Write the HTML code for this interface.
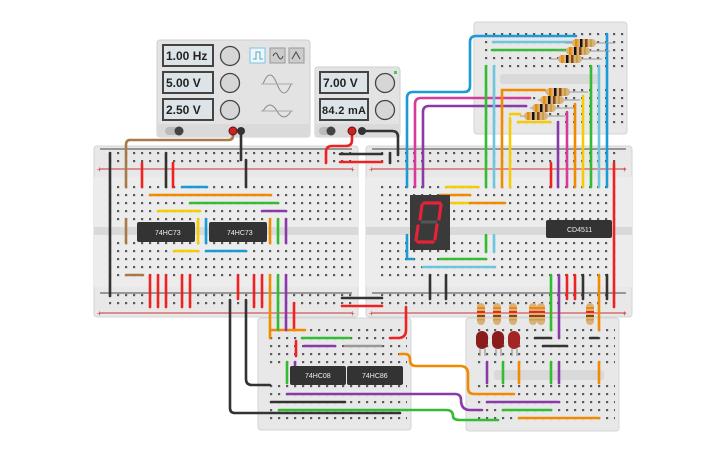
<!DOCTYPE html>
<html><head><meta charset="utf-8"><style>
html,body{margin:0;padding:0;background:#fff;width:725px;height:453px;overflow:hidden}
svg{display:block;font-family:"Liberation Sans",sans-serif}
</style></head><body>
<svg width="725" height="453" viewBox="0 0 725 453" xmlns="http://www.w3.org/2000/svg">
<defs>
<pattern id="pL" x="106" y="183" width="8" height="8" patternUnits="userSpaceOnUse"><rect x="3" y="3" width="2.2" height="2.2" fill="#5a5a5a"/></pattern>
<pattern id="pLr" x="106" y="149" width="8" height="8" patternUnits="userSpaceOnUse"><rect x="3" y="3" width="2.2" height="2.2" fill="#5a5a5a"/></pattern>
<pattern id="pLr2" x="106" y="291" width="8" height="8" patternUnits="userSpaceOnUse"><rect x="3" y="3" width="2.2" height="2.2" fill="#5a5a5a"/></pattern>
<pattern id="pR" x="378" y="183" width="8" height="8" patternUnits="userSpaceOnUse"><rect x="3" y="3" width="2.2" height="2.2" fill="#5a5a5a"/></pattern>
<pattern id="pRr" x="378" y="149" width="8" height="8" patternUnits="userSpaceOnUse"><rect x="3" y="3" width="2.2" height="2.2" fill="#5a5a5a"/></pattern>
<pattern id="pRr2" x="378" y="291" width="8" height="8" patternUnits="userSpaceOnUse"><rect x="3" y="3" width="2.2" height="2.2" fill="#5a5a5a"/></pattern>
<pattern id="pT" x="482" y="30" width="8" height="8" patternUnits="userSpaceOnUse"><rect x="3" y="3" width="2.2" height="2.2" fill="#5a5a5a"/></pattern>
<pattern id="pBL" x="267" y="326" width="8" height="8" patternUnits="userSpaceOnUse"><rect x="3" y="3" width="2.2" height="2.2" fill="#5a5a5a"/></pattern>
<pattern id="pBR" x="475" y="326" width="8" height="8" patternUnits="userSpaceOnUse"><rect x="3" y="3" width="2.2" height="2.2" fill="#5a5a5a"/></pattern>
</defs>

<rect x="94" y="146" width="264" height="171" rx="3" fill="#e8e8e8" stroke="#d4d4d4"/>
<rect x="94" y="177" width="264" height="110" fill="#ececec"/>
<rect x="94" y="227" width="264" height="8" fill="#d9d9d9"/>
<line x1="100" y1="149" x2="352" y2="149" stroke="#444" stroke-width="1"/>
<line x1="100" y1="169" x2="352" y2="169" stroke="#c33" stroke-width="1"/>
<line x1="100" y1="293" x2="352" y2="293" stroke="#444" stroke-width="1"/>
<line x1="100" y1="313" x2="352" y2="313" stroke="#c33" stroke-width="1"/>
<rect x="106" y="149" width="248" height="16" fill="url(#pLr)"/>
<rect x="106" y="291" width="248" height="16" fill="url(#pLr2)"/>
<rect x="106" y="183" width="248" height="40" fill="url(#pL)"/>
<rect x="106" y="239" width="248" height="40" fill="url(#pL)"/>
<text x="97" y="172" font-size="8" fill="#c33">+</text><text x="97" y="316" font-size="8" fill="#c33">+</text>
<text x="350" y="172" font-size="8" fill="#c33">+</text><text x="350" y="316" font-size="8" fill="#c33">+</text>

<rect x="366" y="146" width="266" height="171" rx="3" fill="#e8e8e8" stroke="#d4d4d4"/>
<rect x="366" y="177" width="266" height="110" fill="#ececec"/>
<rect x="366" y="227" width="266" height="8" fill="#d9d9d9"/>
<line x1="372" y1="149" x2="626" y2="149" stroke="#444"/>
<line x1="372" y1="169" x2="626" y2="169" stroke="#c33"/>
<line x1="372" y1="293" x2="626" y2="293" stroke="#444"/>
<line x1="372" y1="313" x2="626" y2="313" stroke="#c33"/>
<rect x="378" y="149" width="240" height="16" fill="url(#pRr)"/>
<rect x="378" y="291" width="240" height="16" fill="url(#pRr2)"/>
<rect x="378" y="183" width="240" height="40" fill="url(#pR)"/>
<rect x="378" y="239" width="240" height="40" fill="url(#pR)"/>
<text x="369" y="172" font-size="8" fill="#c33">+</text><text x="622" y="172" font-size="8" fill="#c33">+</text>
<text x="369" y="316" font-size="8" fill="#c33">+</text><text x="622" y="316" font-size="8" fill="#c33">+</text>

<rect x="474" y="22" width="153" height="112" rx="3" fill="#e8e8e8" stroke="#d4d4d4"/>
<rect x="500" y="74" width="100" height="10" rx="3" fill="#d9d9d9"/>
<rect x="482" y="30" width="144" height="40" fill="url(#pT)"/>
<rect x="482" y="86" width="144" height="40" fill="url(#pT)"/>

<rect x="258" y="318" width="153" height="112" rx="3" fill="#e8e8e8" stroke="#d4d4d4"/>
<rect x="267" y="326" width="140" height="40" fill="url(#pBL)"/>
<rect x="267" y="382" width="140" height="40" fill="url(#pBL)"/>

<rect x="466" y="318" width="153" height="113" rx="3" fill="#e8e8e8" stroke="#d4d4d4"/>
<rect x="494" y="370" width="110" height="10" rx="3" fill="#d9d9d9"/>
<rect x="475" y="326" width="140" height="40" fill="url(#pBR)"/>
<rect x="475" y="382" width="140" height="40" fill="url(#pBR)"/>

<rect x="157" y="40" width="153" height="97" rx="3" fill="#e3e3e3" stroke="#cfcfcf"/>
<rect x="157" y="124" width="153" height="13" fill="#dadada"/>
<rect x="315" y="67" width="85" height="70" rx="3" fill="#e3e3e3" stroke="#cfcfcf"/>
<rect x="315" y="124" width="85" height="13" fill="#dadada"/>
<g stroke="#444" stroke-width="2" fill="#dde4e8">
<rect x="163" y="45" width="50" height="21"/><rect x="163" y="72" width="50" height="21"/><rect x="163" y="99" width="50" height="21"/>
<rect x="320" y="72" width="48" height="21"/><rect x="320" y="99" width="48" height="21"/>
</g>
<g font-size="12" font-weight="bold" fill="#222">
<text x="166" y="60">1.00 Hz</text><text x="166" y="87">5.00 V</text><text x="166" y="114">2.50 V</text>
<text x="323" y="87">7.00 V</text>
</g>
<text x="322" y="114" font-size="11" font-weight="bold" fill="#222" textLength="44">84.2 mA</text>
<g fill="#d6d6d6" stroke="#444" stroke-width="1.3">
<circle cx="230" cy="56" r="9.5"/><circle cx="230" cy="83" r="9.5"/><circle cx="230" cy="110" r="9.5"/>
<circle cx="385" cy="83" r="9.5"/><circle cx="385" cy="110" r="9.5"/>
</g>
<rect x="250" y="48" width="15" height="15" fill="#eef6fb" stroke="#7cc3e8"/>
<rect x="270" y="48" width="15" height="15" fill="#ccc" stroke="#999"/>
<rect x="289" y="48" width="15" height="15" fill="#ccc" stroke="#999"/>
<path d="M253 59 h3 v-7 h4 v7 h3" stroke="#5ab" fill="none"/>
<path d="M273 56 q3 -6 5 0 q3 6 5 0" stroke="#444" fill="none"/>
<path d="M292 59 l4 -7 l4 7" stroke="#444" fill="none"/>
<path d="M263 84 q7 -18 14 0 q7 18 14 0" stroke="#888" fill="none"/><line x1="261" y1="84" x2="293" y2="84" stroke="#aaa"/>
<path d="M263 111 q7 -12 14 0 q7 12 14 0" stroke="#888" fill="none"/><line x1="261" y1="111" x2="293" y2="111" stroke="#aaa"/>
<rect x="165" y="127" width="18" height="8" rx="4" fill="#bbb"/><circle cx="179" cy="131" r="4.5" fill="#444"/>
<rect x="319" y="127" width="16" height="8" rx="4" fill="#bbb"/><circle cx="331" cy="131" r="4.5" fill="#444"/>
<rect x="394" y="71" width="3" height="3" fill="#4c4"/>

<g fill="none" stroke-width="2.6" stroke-linecap="round" stroke-linejoin="round">
<path d="M233 131 V136 Q233 140 228 140 H130 Q126 140 126 145 V187" stroke="#a87a4a"/>
<path d="M126 219 V243 M126 275 H143" stroke="#a87a4a"/>
<path d="M241 131 V160" stroke="#333"/>
<path d="M110 153 V296" stroke="#333"/>
<path d="M166 153 V187 M246 160 V187" stroke="#333"/>
<path d="M142 163 V187 M173 163 V187" stroke="#e22"/>
<path d="M182 187 H207" stroke="#1a9ad6"/>
<path d="M150 195 H271" stroke="#f08a00"/>
<path d="M190 203 H278" stroke="#3b3"/>
<path d="M158 211 H200 M198 219 V243 M174 251 H198" stroke="#f5cc00"/>
<path d="M262 211 H286" stroke="#8a3aa8"/>
<path d="M206 219 V243 M206 251 H246" stroke="#1a9ad6"/>
<path d="M270 219 V243" stroke="#f08a00"/><path d="M278 219 V243" stroke="#3b3"/><path d="M286 219 V243" stroke="#8a3aa8"/>
<path d="M150 275 V307 M158 275 V307 M166 275 V307 M182 275 V307 M190 275 V307 M238 275 V299 M254 275 V307 M262 275 V307" stroke="#e22"/>
<path d="M294 303 V330 M296 341 V356" stroke="#e22"/>
<path d="M270 275 V338 M270 330 H305" stroke="#f08a00"/>
<path d="M278 275 V330" stroke="#3b3"/>
<path d="M286 275 V330" stroke="#8a3aa8"/>
<path d="M230 300 V408 Q230 413 235 413 H400" stroke="#333"/>
<path d="M246 300 V379 Q246 385 252 385 H270" stroke="#333"/>
<path d="M326 163 V152 Q326 146 332 146 H346 Q352 146 352 140 V131" stroke="#e22"/>
<path d="M340 162 H382" stroke="#e22"/><path d="M340 154 H382" stroke="#333"/>
<path d="M342 298 H382" stroke="#333"/><path d="M342 306 H382" stroke="#e22"/>
<path d="M362 131 H392 Q398 131 398 137 V155" stroke="#333"/>
<path d="M390 153 V163" stroke="#333"/>
<path d="M407 187 V98 Q407 92 413 92 H464 Q470 92 470 86 V42 Q470 36 476 36 H576" stroke="#1a9ad6"/>
<path d="M415 187 V104 Q415 98 421 98 H530" stroke="#d63a9a"/>
<path d="M423 187 V112 Q423 106 429 106 H526" stroke="#8a3aa8"/>
<path d="M486 66 V110 M486 90 V187" stroke="#3b3"/>
<path d="M494 66 V110 M494 90 V187" stroke="#6cc7de"/>
<path d="M502 90 V187" stroke="#f08a00"/><path d="M510 118 V187" stroke="#f5cc00"/>
<path d="M493 42 H580" stroke="#6cc7de"/><path d="M492 50 H575" stroke="#3b3"/>
<path d="M502 90 H545" stroke="#f08a00"/>
<path d="M510 114 H520 M518 122 H550" stroke="#f5cc00"/>
<path d="M558 122 V187" stroke="#8a3aa8"/><path d="M567 112 V187" stroke="#d63a9a"/>
<path d="M575 104 V187" stroke="#f08a00"/><path d="M583 96 V187" stroke="#f5cc00"/>
<path d="M591 66 V187" stroke="#3b3"/><path d="M599 66 V187" stroke="#6cc7de"/>
<path d="M607 34 V187" stroke="#1a9ad6"/>
<path d="M551 163 V187" stroke="#e22"/><path d="M614 163 V307" stroke="#e22"/>
<path d="M446 187 H478 M446 203 H470" stroke="#f5cc00"/>
<path d="M440 195 H470 M470 203 H505" stroke="#f08a00"/>
<path d="M486 235 V252" stroke="#3b3"/>
<path d="M494 235 V252" stroke="#6cc7de"/>
<path d="M407 235 V257 M407 259 H413" stroke="#1a9ad6"/>
<path d="M440 259 H486" stroke="#3b3"/><path d="M423 267 H495" stroke="#6cc7de"/>
<path d="M430 275 V299 M446 275 V299" stroke="#333"/>
<path d="M551 275 V330" stroke="#3b3"/><path d="M559 275 V338" stroke="#8a3aa8"/>
<path d="M567 275 V299 M575 275 V299" stroke="#e22"/>
<path d="M583 275 V299 M607 275 V299" stroke="#333"/>
<path d="M599 275 V330" stroke="#f08a00"/>
<path d="M406 307 V330 Q406 338 398 338 H390" stroke="#e22"/>
<path d="M302 338 H350" stroke="#3b3"/>
<path d="M304 346 H335" stroke="#8a3aa8"/>
<path d="M345 346 H381" stroke="#999"/>
<path d="M400 354 H405 Q410 354 410 360 Q410 366 416 366 H460 Q468 366 468 374 V388 Q468 394 474 394 H514" stroke="#f08a00"/>
<path d="M287 362 V383" stroke="#3b3"/><path d="M295 362 V383" stroke="#8a3aa8"/>
<path d="M287 394 H455 Q461 394 461 400 Q461 410 470 410 H482" stroke="#8a3aa8"/>
<path d="M271 402 H345" stroke="#333"/>
<path d="M279 410 H446 Q453 410 453 416 Q453 420 460 420 H498" stroke="#3b3"/>
<path d="M487 362 V383" stroke="#8a3aa8"/><path d="M503 362 V383" stroke="#3b3"/><path d="M519 362 V383" stroke="#f08a00"/>
<path d="M551 362 V383" stroke="#3b3"/><path d="M559 362 V383" stroke="#8a3aa8"/><path d="M599 362 V383" stroke="#f08a00"/>
<path d="M487 402 H559" stroke="#8a3aa8"/><path d="M503 410 H551" stroke="#3b3"/><path d="M519 418 H599" stroke="#f08a00"/>
<path d="M535 338 H551 M543 346 H567 M590 338 H598" stroke="#333"/>
</g>

<rect x="137" y="222" width="58" height="20" rx="2" fill="#333"/>
<rect x="209" y="222" width="58" height="20" rx="2" fill="#333"/>
<text x="155" y="235" font-size="7" fill="#eee">74HC73</text>
<text x="227" y="235" font-size="7" fill="#eee">74HC73</text>
<rect x="546" y="220" width="66" height="18" rx="2" fill="#333"/>
<text x="567" y="232" font-size="7" fill="#eee">CD4511</text>
<rect x="290" y="366" width="56" height="19" rx="2" fill="#333"/>
<rect x="347" y="366" width="56" height="19" rx="2" fill="#333"/>
<text x="305" y="378" font-size="7" fill="#eee">74HC08</text>
<text x="362" y="378" font-size="7" fill="#eee">74HC86</text>

<rect x="410" y="195" width="40" height="55" fill="#3a3a3a"/>
<g stroke="#e5223a" stroke-width="3.2" stroke-linecap="round" fill="none">
<path d="M424 203 H440 M441 205 L439 219 M437 225 L435 239 M433 242 H418 M416 240 L418 226 M420 219 L422 205"/>
</g>
<path d="M421 222 H437" stroke="#555" stroke-width="3"/>

<g stroke="#999" stroke-width="1">
<path d="M565 43 H615 M557 51 H610 M550 59 H602 M545 92 H588 M538 100 H580 M530 108 H574 M520 116 H565"/>
</g>
<g id="rh">
<rect x="572" y="39" width="24" height="8" rx="4" fill="#d9b27a"/><rect x="575" y="39" width="2.5" height="8" fill="#f08a00"/><rect x="580" y="39" width="2.5" height="8" fill="#111"/><rect x="585" y="39" width="2.5" height="8" fill="#8b4513"/><rect x="590" y="39" width="2" height="8" fill="#c9a04a"/>
</g>
<use href="#rh" x="-6" y="8"/><use href="#rh" x="-14" y="16"/>
<use href="#rh" x="-26" y="49"/><use href="#rh" x="-32" y="57"/><use href="#rh" x="-40" y="65"/><use href="#rh" x="-48" y="73"/>

<g id="rv">
<rect x="477" y="303" width="8" height="22" rx="4" fill="#d9b27a"/><rect x="477" y="307" width="8" height="2" fill="#f08a00"/><rect x="477" y="311" width="8" height="2" fill="#e22"/><rect x="477" y="315" width="8" height="2" fill="#8b4513"/><rect x="477" y="319" width="8" height="1.5" fill="#c9a04a"/>
</g>
<use href="#rv" x="16"/><use href="#rv" x="32"/><use href="#rv" x="52"/><use href="#rv" x="60"/><use href="#rv" x="109"/>

<g fill="#8b1c1c"><rect x="476" y="331" width="12" height="18" rx="6"/><rect x="492" y="331" width="12" height="18" rx="6"/></g>
<rect x="508" y="331" width="12" height="18" rx="6" fill="#a52525"/>
<g stroke="#888" stroke-width="1"><path d="M480 349 V356 M485 349 V356 M496 349 V356 M501 349 V356 M512 349 V356 M517 349 V356"/></g>

<circle cx="233" cy="131" r="4" fill="#c22" stroke="#611"/>
<circle cx="241" cy="131" r="4" fill="#333"/>
<circle cx="352" cy="131" r="4" fill="#c22" stroke="#611"/>
<circle cx="362" cy="131" r="4" fill="#333"/>
</svg>
</body></html>
